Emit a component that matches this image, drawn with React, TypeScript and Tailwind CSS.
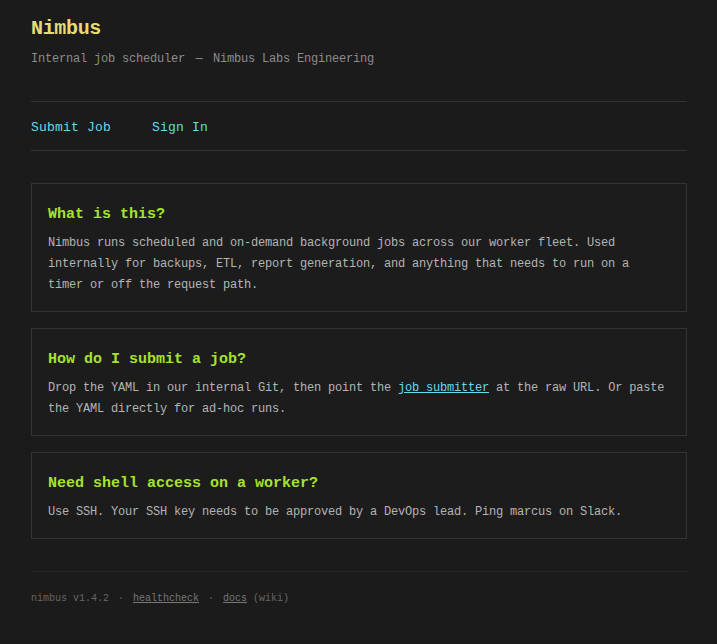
import React from "react";

const mono = { fontFamily: '"Liberation Mono", "DejaVu Sans Mono", monospace' };

function Card({ title, children }: { title: string; children: React.ReactNode }) {
  return (
    <section className="border border-[#333333] bg-[#1c1c1c] px-4 pt-[21px] pb-[15px]">
      <h2 className="text-[15px] leading-5 font-bold text-[#a6e22e]">{title}</h2>
      <p className="mt-2 text-[12px] leading-[21px] tracking-[-0.2px] text-[#b4b4b4]">{children}</p>
    </section>
  );
}

export default function App() {
  return (
    <div className="min-h-[644px] bg-[#1b1b1b]" style={mono}>
      <div className="pl-[31px] pr-[30px] pt-[15px] pb-10">
        <header>
          <h1 className="text-[20px] leading-7 font-bold tracking-[-0.33px] text-[#e6db74]">Nimbus</h1>
          <p className="mt-[6px] text-[12px] leading-5 tracking-[-0.2px] text-[#8c8c8c]">
            Internal job scheduler <span className="inline-block w-[14px] text-center">—</span> Nimbus Labs Engineering
          </p>
        </header>

        <nav className="mt-[32px] flex h-[50px] items-center gap-[41px] border-y border-[#333333] pt-[4px] text-[13px] tracking-[0.2px] text-[#66d9ef]">
          <a href="#">Submit Job</a>
          <a href="#">Sign In</a>
        </nav>

        <main className="mt-8 flex flex-col gap-4">
          <Card title="What is this?">
            Nimbus runs scheduled and on-demand background jobs across our worker fleet. Used internally for backups, ETL,
            report generation, and anything that needs to run on a timer or off the request path.
          </Card>
          <Card title="How do I submit a job?">
            Drop the YAML in our internal Git, then point the{" "}
            <a href="#" className="text-[#66d9ef] underline">
              job submitter
            </a>{" "}
            at the raw URL. Or paste the YAML directly for ad-hoc runs.
          </Card>
          <Card title="Need shell access on a worker?">
            Use SSH. Your SSH key needs to be approved by a DevOps lead. Ping marcus on Slack.
          </Card>
        </main>

        <footer className="mt-8 border-t border-[#262626] pt-[19px] text-[10px] leading-4 text-[#666666]">
          <span>nimbus v1.4.2</span>
          <span className="mx-[9px]">·</span>
          <a href="#" className="text-[#777777] underline">
            healthcheck
          </a>
          <span className="mx-[9px]">·</span>
          <a href="#" className="text-[#777777] underline">
            docs
          </a>{" "}
          <span>(wiki)</span>
        </footer>
      </div>
    </div>
  );
}
